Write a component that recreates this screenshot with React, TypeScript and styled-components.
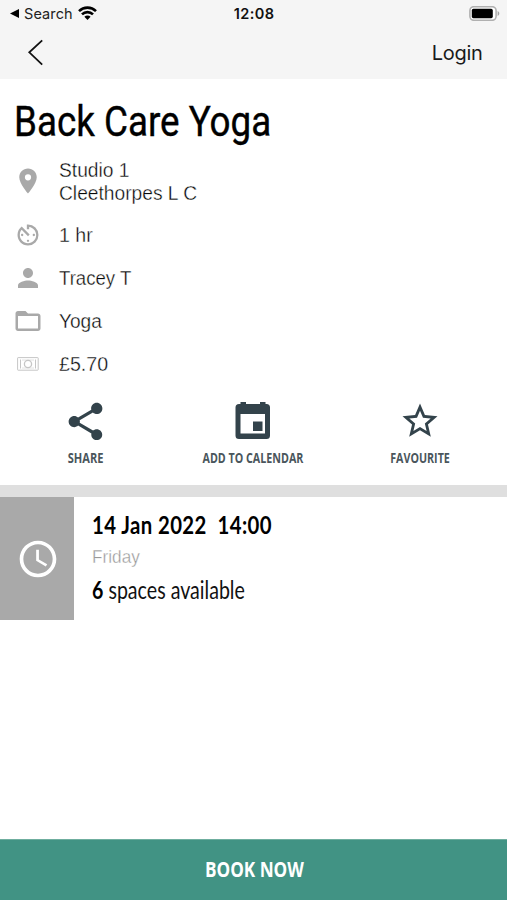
import React from "react";
import styled, { createGlobalStyle } from "styled-components";
import {
  MdPlace,
  MdAvTimer,
  MdPerson,
  MdFolderOpen,
  MdShare,
  MdStarOutline,
  MdAccessTime,
} from "react-icons/md";

const GlobalStyle = createGlobalStyle`
  * { box-sizing: border-box; }
  body { margin: 0; background: #fff; }
  svg { display: block; flex: none; }
`;

const humanist = `Lato, "Open Sans", sans-serif`;
const label = `"Open Sans", "Noto Sans", sans-serif`;
const light = `"Liberation Sans", Arial, sans-serif`;

const Screen = styled.div`
  width: 507px;
  height: 900px;
  display: flex;
  flex-direction: column;
  overflow: hidden;
  background: #fff;
  color: #000;
`;

const Condensed = styled.span<{ $x: number; $origin?: string }>`
  display: inline-block;
  white-space: pre;
  transform: scaleX(${(p) => p.$x});
  transform-origin: ${(p) => p.$origin ?? "left"} center;
`;

const Header = styled.header`
  height: 79px;
  flex: none;
  background: #f5f5f5;
`;

const StatusBar = styled.div`
  height: 27px;
  display: grid;
  grid-template-columns: 1fr auto 1fr;
  align-items: center;
  padding: 0 7px 0 10px;
  font: 400 14.5px/27px Inter, sans-serif;
  color: #222;
`;

const BackToApp = styled.div`
  display: flex;
  align-items: center;
  gap: 5px;
  letter-spacing: 0.1px;
  svg { margin-bottom: 1px; }
`;

const Clock = styled.div`
  margin-right: 2px;
  font-weight: 600;
  letter-spacing: 0.4px;
  color: #111;
`;

const BatterySlot = styled.div`
  justify-self: end;
`;

const NavBar = styled.nav`
  height: 52px;
  display: flex;
  align-items: center;
  justify-content: space-between;
  padding: 0 24.5px 2px 27px;
`;

const Login = styled.a`
  font: 400 20px/26px Inter, sans-serif;
  letter-spacing: -0.3px;
  padding-top: 1px;
  color: #1a1a1a;
`;

const Title = styled.h1`
  margin: 0;
  padding: 18px 0 0 14px;
  height: 80px;
  flex: none;
  font: 400 42px/50px Roboto, sans-serif;
  -webkit-text-stroke: 0.4px #000;
`;

const Details = styled.ul`
  list-style: none;
  margin: 0;
  padding: 0;
  flex: none;
`;

const Detail = styled.li<{ $h: number }>`
  height: ${(p) => p.$h}px;
  display: flex;
  align-items: center;
  font: 400 20px/23px ${light};
  color: #080808;
  -webkit-text-stroke: 0.35px #fff;
`;

const DetailIcon = styled.span<{ $lift?: number }>`
  width: 56px;
  margin-right: 3px;
  padding-bottom: ${(p) => p.$lift ?? 2}px;
  display: flex;
  justify-content: center;
  color: #a9a9a9;
`;

const Actions = styled.div`
  height: 108px;
  flex: none;
  display: grid;
  grid-template-columns: repeat(3, 167px);
  padding: 18px 0 0 2px;
`;

const Action = styled.button`
  border: 0;
  padding: 0;
  background: none;
  display: flex;
  flex-direction: column;
  align-items: center;
  justify-content: flex-start;
  font: 700 14px/20px ${label};
  color: #4a565c;
`;

const ActionIcon = styled.span<{ $lift?: number }>`
  height: 53px;
  padding-bottom: ${(p) => p.$lift ?? 1}px;
  display: flex;
  align-items: center;
  color: #33434b;
`;

const Divider = styled.div`
  height: 12px;
  flex: none;
  background: #dfdfdf;
`;

const Session = styled.section`
  height: 123px;
  flex: none;
  display: flex;
`;

const SessionIcon = styled.div`
  width: 74px;
  padding-left: 1px;
  display: flex;
  align-items: center;
  justify-content: center;
  background: #a9a9a9;
  color: #fff;
`;

const SessionInfo = styled.div`
  padding: 12px 0 0 18px;
  display: flex;
  flex-direction: column;
  align-items: flex-start;
`;

const When = styled.div`
  font: 700 24.5px/32px ${humanist};
  letter-spacing: 0.5px;
  height: 32px;
`;

const Day = styled.div`
  font: 400 18.5px/32px ${light};
  color: #999;
  -webkit-text-stroke: 0.35px #fff;
  height: 33px;
`;

const Spaces = styled.div`
  font: 400 24.5px/32px ${humanist};
  color: #111;
  height: 32px;
  display: flex;
  b { font-weight: 700; color: #000; }
`;

const BookButton = styled.button`
  margin-top: auto;
  height: 61px;
  flex: none;
  border: 0;
  border-top: 1px solid #6fae9f;
  background: #419384;
  color: #fff;
  font: 700 22px/56px ${label};
  padding: 0 0 4px 1px;
`;

const Wifi = () => (
  <svg width="19" height="14" viewBox="0 0 19 14">
    <g fill="none" stroke="#000" strokeWidth="2.6">
      <path d="M1 5.1a12.2 12.2 0 0 1 17 0" />
      <path d="M4 8.4a7.8 7.8 0 0 1 11 0" />
    </g>
    <path d="M9.5 14 6.4 10.8a4.4 4.4 0 0 1 6.2 0z" />
  </svg>
);

const Battery = () => (
  <svg width="31" height="15" viewBox="0 0 31 15">
    <rect x="0.9" y="0.7" width="26.2" height="13.6" rx="4" fill="#fff" stroke="#b0b0b0" strokeWidth="1.6" />
    <rect x="2.8" y="2.8" width="21" height="9.4" rx="1.6" />
    <path d="M28.6 5v5c1-.4 1.7-1.4 1.7-2.5S29.6 5.4 28.6 5z" fill="#a3a3a3" />
  </svg>
);

const BankNote = () => (
  <svg width="22" height="14" viewBox="0 0 22 14" fill="none" stroke="#c6c6c6">
    <rect x="0.6" y="0.6" width="20.6" height="12.6" rx="0.5" />
    <path d="M3.5 2.5v9M18.5 2.5v9" />
    <path d="M5 3h12M5 11h12" stroke="#e2e2e2" />
    <circle cx="11" cy="7" r="3.6" fill="#fff" strokeWidth="1.3" />
  </svg>
);

const CalendarDay = () => (
  <svg width="36" height="38" viewBox="0.5 0 36 38" fill="currentColor">
    <path d="M6 3V1h5.5v2h14V1H31v2h1a3.5 3.5 0 0 1 3.5 3.5v28A3.5 3.5 0 0 1 32 38H4.5A3.5 3.5 0 0 1 1 34.5v-28A3.5 3.5 0 0 1 4.5 3z" />
    <path d="M6 13h24.5v19.5H6z" fill="#fff" />
    <path d="M18.5 20.5H28V30h-9.500z" />
  </svg>
);

export default function App() {
  return (
    <Screen>
      <GlobalStyle />
      <Header>
        <StatusBar>
          <BackToApp>
            <svg width="9" height="9" viewBox="0 0 9 9"><path d="M0 4.5 9 0v9z" /></svg>
            Search
            <Wifi />
          </BackToApp>
          <Clock>12:08</Clock>
          <BatterySlot><Battery /></BatterySlot>
        </StatusBar>
        <NavBar>
          <svg width="18" height="27" viewBox="0 0 18 27" fill="none" stroke="#111" strokeWidth="1.8">
            <path d="M15.2 1.3 2.3 13.3l12.9 12.4" />
          </svg>
          <Login>Login</Login>
        </NavBar>
      </Header>

      <Title><Condensed $x={0.876}>Back Care Yoga</Condensed></Title>

      <Details>
        <Detail $h={45}>
          <DetailIcon><MdPlace size={30} /></DetailIcon>
          <Condensed $x={0.96}>{"Studio 1\nCleethorpes L C"}</Condensed>
        </Detail>
        <Detail $h={62}>
          <DetailIcon $lift={0}><MdAvTimer size={28} /></DetailIcon>
          <Condensed $x={0.98}>1 hr</Condensed>
        </Detail>
        <Detail $h={25}>
          <DetailIcon><MdPerson size={30} /></DetailIcon>
          <Condensed $x={0.93}>Tracey T</Condensed>
        </Detail>
        <Detail $h={61}>
          <DetailIcon $lift={1}><MdFolderOpen size={30} /></DetailIcon>
          <Condensed $x={0.955}>Yoga</Condensed>
        </Detail>
        <Detail $h={25}>
          <DetailIcon><BankNote /></DetailIcon>
          <Condensed $x={0.98}>£5.70</Condensed>
        </Detail>
      </Details>

      <Actions>
        <Action>
          <ActionIcon><MdShare size={45} /></ActionIcon>
          <Condensed $x={0.79} $origin="center">SHARE</Condensed>
        </Action>
        <Action>
          <ActionIcon $lift={3}><CalendarDay /></ActionIcon>
          <Condensed $x={0.765} $origin="center">ADD TO CALENDAR</Condensed>
        </Action>
        <Action>
          <ActionIcon><MdStarOutline size={42} /></ActionIcon>
          <Condensed $x={0.765} $origin="center">FAVOURITE</Condensed>
        </Action>
      </Actions>

      <Divider />

      <Session>
        <SessionIcon><MdAccessTime size={44} /></SessionIcon>
        <SessionInfo>
          <When><Condensed $x={0.83}>{"14 Jan 2022  14:00"}</Condensed></When>
          <Day><Condensed $x={0.93}>Friday</Condensed></Day>
          <Spaces><Condensed $x={0.8}><b>6</b> spaces available</Condensed></Spaces>
        </SessionInfo>
      </Session>

      <BookButton><Condensed $x={0.78} $origin="center">BOOK NOW</Condensed></BookButton>
    </Screen>
  );
}
